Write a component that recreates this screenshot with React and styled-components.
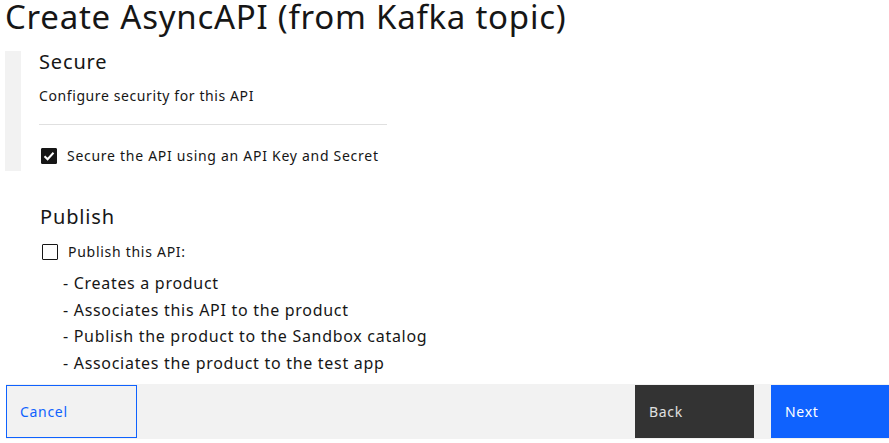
import React from "react";
import styled, { createGlobalStyle } from "styled-components";

const Global = createGlobalStyle`
  html, body { margin: 0; padding: 0; background: #ffffff; }
  body {
    font-family: "Noto Sans", "Open Sans", Arial, sans-serif;
    color: #161616;
    -webkit-font-smoothing: antialiased;
  }
  * { box-sizing: border-box; }
`;

const Page = styled.div`
  width: 889px;
  height: 443px;
  display: flex;
  flex-direction: column;
  overflow: hidden;
`;

const Title = styled.h1`
  margin: 0 0 18px 5px;
  font-size: 33px;
  line-height: 33px;
  font-weight: 400;
  white-space: nowrap;
  letter-spacing: 0.75px;
`;

const SecureRow = styled.section`
  display: flex;
  gap: 18px;
  margin-left: 5px;
`;

const Rail = styled.div`
  width: 16px;
  background: #f2f2f2;
`;

const SectionBody = styled.div`
  display: flex;
  flex-direction: column;
  padding-bottom: 7px;
`;

const Heading = styled.h2`
  margin: 0;
  font-size: 20px;
  line-height: 22px;
  font-weight: 400;
  letter-spacing: 0.85px;
`;

const Helper = styled.p`
  margin: 14px 0 0;
  font-size: 14px;
  line-height: 18px;
  letter-spacing: 0.6px;
`;

const Divider = styled.hr`
  width: 348px;
  margin: 19px 0 0;
  border: 0;
  border-top: 1px solid #e0e0e0;
`;

const CheckRow = styled.label`
  display: flex;
  align-items: center;
  gap: 10px;
  margin-top: ${(p) => p.$top}px;
  margin-left: ${(p) => p.$left || 0}px;
  font-size: 14px;
  line-height: 16px;
  height: 16px;
  letter-spacing: 0.72px;
`;

const Box = styled.span`
  width: 16px;
  height: 16px;
  flex: none;
  border-radius: 1px;
  display: flex;
  align-items: center;
  justify-content: center;
  background: ${(p) => (p.$checked ? "#161616" : "#ffffff")};
  border: 1px solid #161616;
`;

const PublishSection = styled.section`
  display: flex;
  flex-direction: column;
  margin: 35px 0 0 40px;
`;

const Bullets = styled.ul`
  list-style: none;
  margin: 10px 0 0 23px;
  padding: 0;
  font-size: 16px;
  line-height: 26.5px;
  letter-spacing: 0.7px;
`;

const Footer = styled.footer`
  margin: auto 0 4px 6px;
  height: 55px;
  background: #f2f2f2;
  display: flex;
  align-items: center;
`;

const Button = styled.button`
  height: 53px;
  width: ${(p) => p.$w}px;
  margin-left: ${(p) => p.$ml || 0}px;
  padding: 0 0 0 13px;
  text-align: left;
  font-family: inherit;
  font-size: 14px;
  letter-spacing: 0.7px;
  cursor: pointer;
  border: 1px solid ${(p) => p.$border};
  background: ${(p) => p.$bg};
  color: ${(p) => p.$fg};
`;

const Check = () => (
  <svg width="12" height="10" viewBox="0 0 12 10">
    <path d="M1.5 5.2 L4.6 8.2 L10.5 1.8" fill="none" stroke="#fff" strokeWidth="2" />
  </svg>
);

export default function App() {
  return (
    <>
      <Global />
      <Page>
        <Title>Create AsyncAPI (from Kafka topic)</Title>
        <SecureRow>
          <Rail />
          <SectionBody>
            <Heading>Secure</Heading>
            <Helper>Configure security for this API</Helper>
            <Divider />
            <CheckRow $top={23} $left={2}>
              <Box $checked>
                <Check />
              </Box>
              Secure the API using an API Key and Secret
            </CheckRow>
          </SectionBody>
        </SecureRow>
        <PublishSection>
          <Heading>Publish</Heading>
          <CheckRow $top={16} $left={2}>
            <Box />
            Publish this API:
          </CheckRow>
          <Bullets>
            <li>- Creates a product</li>
            <li>- Associates this API to the product</li>
            <li>- Publish the product to the Sandbox catalog</li>
            <li>- Associates the product to the test app</li>
          </Bullets>
        </PublishSection>
        <Footer>
          <Button $w={131} $border="#0f62fe" $bg="#f2f2f2" $fg="#0f62fe">
            Cancel
          </Button>
          <Button $w={119} $ml={498} $border="#333333" $bg="#333333" $fg="#e0e0e0">
            Back
          </Button>
          <Button $w={118} $ml={17} $border="#0f62fe" $bg="#0f62fe" $fg="#ffffff">
            Next
          </Button>
        </Footer>
      </Page>
    </>
  );
}
